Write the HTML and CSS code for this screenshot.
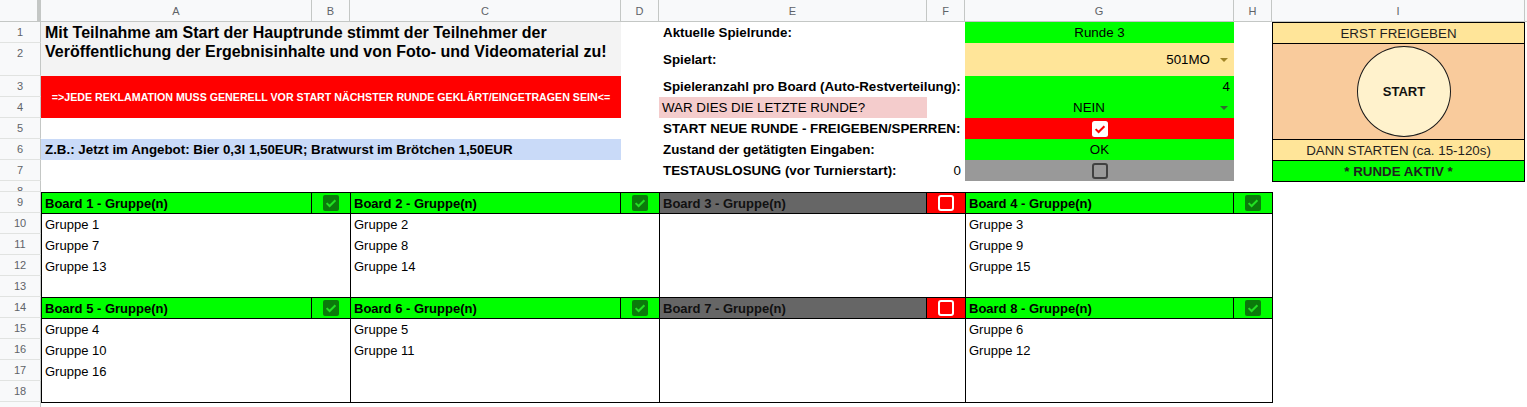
FILE: index.html
```html
<!DOCTYPE html>
<html lang="de">
<head>
<meta charset="utf-8">
<title>Turnierübersicht</title>
<link rel="stylesheet" href="styles.css">
</head>
<body>
<div class="sheet">
  <div class="corner"></div>
  <div class="colhdr">A</div>
  <div class="colhdr">B</div>
  <div class="colhdr">C</div>
  <div class="colhdr">D</div>
  <div class="colhdr">E</div>
  <div class="colhdr">F</div>
  <div class="colhdr">G</div>
  <div class="colhdr">H</div>
  <div class="colhdr">I</div>
  <div class="colhdr rest"></div>

  <div class="rowhdr">1</div>
  <div class="rowhdr">2</div>
  <div class="rowhdr">3</div>
  <div class="rowhdr">4</div>
  <div class="rowhdr">5</div>
  <div class="rowhdr">6</div>
  <div class="rowhdr">7</div>
  <div class="rowhdr">8</div>
  <div class="rowhdr">9</div>
  <div class="rowhdr">10</div>
  <div class="rowhdr">11</div>
  <div class="rowhdr">12</div>
  <div class="rowhdr">13</div>
  <div class="rowhdr">14</div>
  <div class="rowhdr">15</div>
  <div class="rowhdr">16</div>
  <div class="rowhdr">17</div>
  <div class="rowhdr">18</div>
  <div class="rowhdr">19</div>

  <div class="head">Mit Teilnahme am Start der Hauptrunde stimmt der Teilnehmer der Veröffentlichung der Ergebnisinhalte und von Foto- und Videomaterial zu!</div>
  <div class="banner">=&gt;JEDE REKLAMATION MUSS GENERELL VOR START NÄCHSTER RUNDE GEKLÄRT/EINGETRAGEN SEIN&lt;=</div>
  <div class="note">Z.B.: Jetzt im Angebot: Bier 0,3l 1,50EUR; Bratwurst im Brötchen 1,50EUR</div>

  <div class="lbl row1">Aktuelle Spielrunde:</div>
  <div class="lbl row2">Spielart:</div>
  <div class="lbl row3">Spieleranzahl pro Board (Auto-Restverteilung):</div>
  <div class="lbl q row4">WAR DIES DIE LETZTE RUNDE?</div>
  <div class="lbl row5">START NEUE RUNDE - FREIGEBEN/SPERREN:</div>
  <div class="lbl row6">Zustand der getätigten Eingaben:</div>
  <div class="lbl single row7">TESTAUSLOSUNG (vor Turnierstart):</div>
  <div class="fnum row7">0</div>

  <div class="val green row1">Runde 3</div>
  <div class="val yellow row2 dd-right">
    <span>501MO</span>
    <svg class="arrow" width="8" height="4" viewBox="0 0 8 4"><path d="M0 0H8L4 4Z" fill="#a08426"/></svg>
  </div>
  <div class="val green row3 right">4</div>
  <div class="val green row4 dd-center">
    <span class="ddtext">NEIN</span>
    <svg class="arrow" width="8" height="4" viewBox="0 0 8 4"><path d="M0 0H8L4 4Z" fill="#2f6a2f"/></svg>
  </div>
  <div class="val red row5">
    <svg width="16" height="16" viewBox="0 0 16 16"><rect width="16" height="16" rx="2.5" fill="#fff"/><path d="M3.6 8.1L6.6 11L12.4 5.2" fill="none" stroke="#f00" stroke-width="2"/></svg>
  </div>
  <div class="val green row6">OK</div>
  <div class="val gray row7">
    <svg width="16" height="16" viewBox="0 0 16 16"><rect x="1" y="1" width="14" height="14" rx="2" fill="none" stroke="#404040" stroke-width="2"/></svg>
  </div>

  <div class="panel">
    <div class="p-top">ERST FREIGEBEN</div>
    <div class="p-mid"><div class="startbtn">START</div></div>
    <div class="p-bot">DANN STARTEN (ca. 15-120s)</div>
    <div class="p-act">* RUNDE AKTIV *</div>
  </div>

  <div class="boards">
    <div class="board">
      <div class="bhead"><div class="bname">Board 1 - Gruppe(n)</div><div class="bcheck"><svg width="16" height="16" viewBox="0 0 16 16"><rect width="16" height="16" rx="2" fill="#0b7a0b"/><path d="M3.6 8.1L6.6 11L12.4 5.2" fill="none" stroke="#22e022" stroke-width="2"/></svg></div></div>
      <div class="bbody"><div>Gruppe 1</div><div>Gruppe 7</div><div>Gruppe 13</div></div>
    </div>
    <div class="board">
      <div class="bhead"><div class="bname">Board 2 - Gruppe(n)</div><div class="bcheck"><svg width="16" height="16" viewBox="0 0 16 16"><rect width="16" height="16" rx="2" fill="#0b7a0b"/><path d="M3.6 8.1L6.6 11L12.4 5.2" fill="none" stroke="#22e022" stroke-width="2"/></svg></div></div>
      <div class="bbody"><div>Gruppe 2</div><div>Gruppe 8</div><div>Gruppe 14</div></div>
    </div>
    <div class="board off">
      <div class="bhead"><div class="bname">Board 3 - Gruppe(n)</div><div class="bcheck"><svg width="16" height="16" viewBox="0 0 16 16"><rect x="1" y="1" width="14" height="14" rx="2" fill="none" stroke="#fff" stroke-width="2"/></svg></div></div>
      <div class="bbody"></div>
    </div>
    <div class="board">
      <div class="bhead"><div class="bname">Board 4 - Gruppe(n)</div><div class="bcheck"><svg width="16" height="16" viewBox="0 0 16 16"><rect width="16" height="16" rx="2" fill="#0b7a0b"/><path d="M3.6 8.1L6.6 11L12.4 5.2" fill="none" stroke="#22e022" stroke-width="2"/></svg></div></div>
      <div class="bbody"><div>Gruppe 3</div><div>Gruppe 9</div><div>Gruppe 15</div></div>
    </div>
    <div class="board">
      <div class="bhead"><div class="bname">Board 5 - Gruppe(n)</div><div class="bcheck"><svg width="16" height="16" viewBox="0 0 16 16"><rect width="16" height="16" rx="2" fill="#0b7a0b"/><path d="M3.6 8.1L6.6 11L12.4 5.2" fill="none" stroke="#22e022" stroke-width="2"/></svg></div></div>
      <div class="bbody"><div>Gruppe 4</div><div>Gruppe 10</div><div>Gruppe 16</div></div>
    </div>
    <div class="board">
      <div class="bhead"><div class="bname">Board 6 - Gruppe(n)</div><div class="bcheck"><svg width="16" height="16" viewBox="0 0 16 16"><rect width="16" height="16" rx="2" fill="#0b7a0b"/><path d="M3.6 8.1L6.6 11L12.4 5.2" fill="none" stroke="#22e022" stroke-width="2"/></svg></div></div>
      <div class="bbody"><div>Gruppe 5</div><div>Gruppe 11</div></div>
    </div>
    <div class="board off">
      <div class="bhead"><div class="bname">Board 7 - Gruppe(n)</div><div class="bcheck"><svg width="16" height="16" viewBox="0 0 16 16"><rect x="1" y="1" width="14" height="14" rx="2" fill="none" stroke="#fff" stroke-width="2"/></svg></div></div>
      <div class="bbody"></div>
    </div>
    <div class="board">
      <div class="bhead"><div class="bname">Board 8 - Gruppe(n)</div><div class="bcheck"><svg width="16" height="16" viewBox="0 0 16 16"><rect width="16" height="16" rx="2" fill="#0b7a0b"/><path d="M3.6 8.1L6.6 11L12.4 5.2" fill="none" stroke="#22e022" stroke-width="2"/></svg></div></div>
      <div class="bbody"><div>Gruppe 6</div><div>Gruppe 12</div></div>
    </div>
  </div>
</div>
</body>
</html>
```

FILE: styles.css
```css
* { box-sizing: border-box; margin: 0; padding: 0; }
html, body { overflow: hidden; background: #fff; }
body {
  font-family: "Liberation Sans", Arial, sans-serif;
  font-size: 13.33px;
  color: #000;
}

.sheet {
  display: grid;
  grid-template-columns: 41px 271px 38px 271px 38px 268px 38px 269px 38px 253px 1fr;
  grid-template-rows: 22px 21px 33px 21px 21px 21px 21px 21px 11px repeat(11, 21px);
  width: 1527px;
}

.corner {
  grid-row: 1;
  background: #f8f9fa;
  border-right: 4px solid #c4c7c5;
  border-bottom: 1px solid #c4c7c5;
}
.colhdr {
  grid-row: 1;
  background: #f8f9fa;
  border-right: 1px solid #c4c7c5;
  border-bottom: 1px solid #c4c7c5;
  display: flex;
  align-items: center;
  justify-content: center;
  font-size: 11px;
  color: #5f6368;
}
.colhdr.rest { border-right: 0; }

.rowhdr {
  grid-column: 1;
  background: #f8f9fa;
  border-right: 1px solid #c4c7c5;
  border-bottom: 1px solid #e1e3e1;
  text-align: center;
  line-height: 20px;
  font-size: 11px;
  color: #5f6368;
  overflow: hidden;
}

.head {
  grid-column: 2 / 5;
  grid-row: 2 / 4;
  background: #f3f3f3;
  font-weight: bold;
  font-size: 16px;
  line-height: 18.5px;
  padding: 2px 4px 0 4px;
}
.banner {
  grid-column: 2 / 5;
  grid-row: 4 / 6;
  background: #ff0000;
  color: #fff;
  font-weight: bold;
  font-size: 10.67px;
  display: flex;
  align-items: center;
  justify-content: center;
  white-space: nowrap;
}
.note {
  grid-column: 2 / 5;
  grid-row: 7;
  background: #c9daf8;
  font-weight: bold;
  display: flex;
  align-items: center;
  padding-left: 4px;
  white-space: nowrap;
}

.row1 { grid-row: 2; }
.row2 { grid-row: 3; }
.row3 { grid-row: 4; }
.row4 { grid-row: 5; }
.row5 { grid-row: 6; }
.row6 { grid-row: 7; }
.row7 { grid-row: 8; }

.lbl {
  grid-column: 6 / 8;
  display: flex;
  align-items: center;
  padding-left: 4px;
  font-weight: bold;
  white-space: nowrap;
}
.lbl.single { grid-column: 6; }
.lbl.q {
  grid-column: 6;
  background: #f4cccc;
  font-weight: normal;
  padding-left: 3px;
}
.fnum {
  grid-column: 7;
  display: flex;
  align-items: center;
  justify-content: flex-end;
  padding-right: 4px;
}

.val {
  grid-column: 8;
  display: flex;
  align-items: center;
  justify-content: center;
}
.val.right { justify-content: flex-end; padding-right: 4px; }
.val.dd-right { justify-content: flex-end; padding-right: 6px; gap: 10px; }
.val.dd-center {
  display: grid;
  grid-template-columns: 1fr 21px;
  align-items: center;
}
.dd-center .ddtext { justify-self: center; }
.dd-center .arrow { justify-self: center; }

.green { background: #00ff00; }
.yellow { background: #ffe599; }
.red { background: #ff0000; }
.gray { background: #999999; }

.panel {
  grid-column: 10;
  grid-row: 2 / 10;
  align-self: start;
  height: 160px;
  background: #000;
  padding: 1px;
  display: grid;
  grid-template-rows: 20px 95px 20px 20px;
  gap: 1px;
}
.panel > div {
  display: flex;
  align-items: center;
  justify-content: center;
  color: #1f1f1f;
}
.p-top, .p-bot { background: #ffe599; }
.p-mid { background: #f9cb9c; padding-left: 11px; }
.p-act { background: #00ff00; font-weight: bold; }
.startbtn {
  width: 94px;
  height: 91px;
  border: 1px solid #1a1a1a;
  border-radius: 50%;
  background: #fff2cc;
  display: flex;
  align-items: center;
  justify-content: center;
  font-weight: bold;
  font-size: 13px;
  color: #111;
}

.boards {
  grid-column: 2 / 10;
  grid-row: 10 / 21;
  align-self: start;
  justify-self: start;
  width: 1232px;
  height: 211px;
  background: #000;
  padding: 1px;
  display: grid;
  grid-template-columns: 308px 308px 305px 306px;
  grid-template-rows: 104px 104px;
  gap: 1px;
}
.board {
  display: grid;
  grid-template-rows: 20px 83px;
  gap: 1px;
}
.bhead {
  display: grid;
  grid-template-columns: 1fr 38px;
  gap: 1px;
}
.bname {
  background: #00ff00;
  font-weight: bold;
  font-size: 13px;
  display: flex;
  align-items: center;
  padding-left: 3px;
  white-space: nowrap;
}
.bcheck {
  background: #00ff00;
  display: flex;
  align-items: center;
  justify-content: center;
}
.off .bname { background: #666666; color: #111; }
.off .bcheck { background: #ff0000; }
.bbody {
  background: #fff;
  padding-left: 3px;
  font-size: 13px;
  line-height: 21px;
}
```
